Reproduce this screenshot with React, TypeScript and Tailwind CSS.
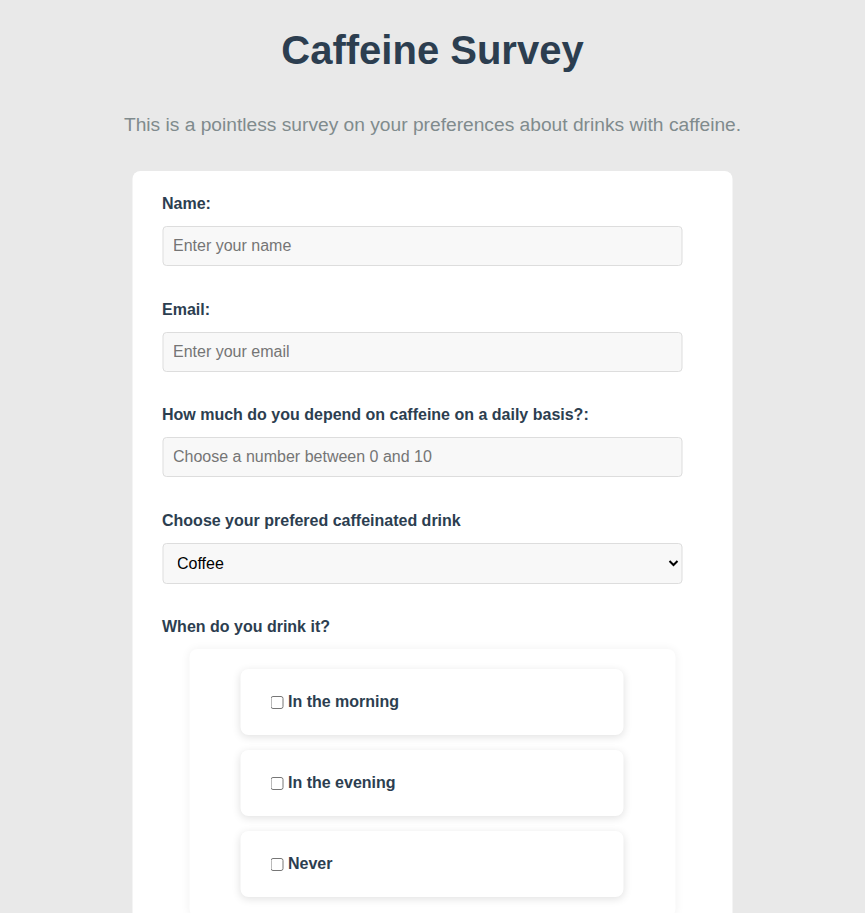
import React from "react";

const font = { fontFamily: '"Liberation Sans", Arial, sans-serif' };

function Field({ label, placeholder, mb }: { label: string; placeholder: string; mb: string }) {
  return (
    <div className={mb}>
      <label className="block text-[16px] leading-[19px] font-bold text-[#2c3e50] mb-[13px]">{label}</label>
      <input
        type="text"
        placeholder={placeholder}
        className="block w-[520px] h-[40px] px-[10px] rounded-[4px] border border-[#dddddd] bg-[#f8f8f8] text-[16px] text-black placeholder:text-[#757575] outline-none"
      />
    </div>
  );
}

function Option({ label }: { label: string }) {
  return (
    <div className="flex items-center h-[66px] pl-[30px] rounded-[8px] bg-white shadow-[0_2px_8px_rgba(0,0,0,0.12)]">
      <input type="checkbox" className="m-0 w-[13px] h-[13px]" />
      <span className="ml-[5px] text-[16px] font-bold text-[#2c3e50]">{label}</span>
    </div>
  );
}

export default function App() {
  return (
    <div className="min-h-[913px] bg-[#e9e9e9] flex flex-col items-center" style={font}>
      <h1 className="mt-[27px] text-[40px] leading-[46px] font-bold text-[#2c3e50]">Caffeine Survey</h1>
      <p className="mt-[41px] text-[19.2px] leading-[22px] text-[#808b8d]">
        This is a pointless survey on your preferences about drinks with caffeine.
      </p>
      <div className="mt-[35px] w-[600px] -translate-x-[0.5px] bg-white rounded-[8px] pt-[23px] px-[30px] pb-[40px]">
        <Field label="Name:" placeholder="Enter your name" mb="mb-[34px]" />
        <Field label="Email:" placeholder="Enter your email" mb="mb-[33px]" />
        <Field label="How much do you depend on caffeine on a daily basis?:" placeholder="Choose a number between 0 and 10" mb="mb-[34px]" />
        <div className="mb-[33px]">
          <label className="block text-[16px] leading-[19px] font-bold text-[#2c3e50] mb-[13px]">
            Choose your prefered caffeinated drink
          </label>
          <select className="block w-[520px] h-[41px] px-[10px] rounded-[4px] border border-[#dddddd] bg-[#f8f8f8] text-[16px] text-black outline-none">
            <option>Coffee</option>
            <option>Tea</option>
            <option>Energy drink</option>
          </select>
        </div>
        <label className="block text-[16px] leading-[19px] font-bold text-[#2c3e50] mb-[13px]">When do you drink it?</label>
        <div className="ml-[27px] w-[486px] bg-white rounded-[8px] shadow-[0_0_10px_rgba(0,0,0,0.06)] pt-[20px] pb-[20px] pl-[51px] pr-[52px] flex flex-col gap-[15px]">
          <Option label="In the morning" />
          <Option label="In the evening" />
          <Option label="Never" />
        </div>
      </div>
    </div>
  );
}
